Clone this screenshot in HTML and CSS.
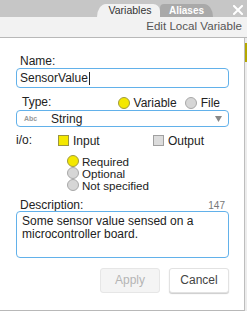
FILE: index.html
```html
<!DOCTYPE html>
<html>
<head>
<meta charset="utf-8">
<link rel="stylesheet" href="styles.css">
</head>
<body>
<div class="window">
  <div class="topbar">
    <div class="tab tab-active">Variables</div>
    <div class="tab tab-inactive">Aliases</div>
    <svg class="close" width="10" height="10" viewBox="0 0 10 10"><path d="M1 1 L9 9 M9 1 L1 9" stroke="#fff" stroke-width="2" stroke-linecap="square"/></svg>
  </div>
  <div class="subbar">Edit Local Variable</div>
  <div class="main">
    <div class="panel">
      <div class="lbl lbl-name">Name:</div>
      <div class="input">SensorValue<span class="caret"></span></div>

      <div class="type-row">
        <span class="lbl lbl-type">Type:</span>
        <span class="opts">
          <span class="radio radio-on"></span><span class="opt">Variable</span>
          <span class="radio"></span><span class="opt">File</span>
        </span>
      </div>
      <div class="select">
        <span class="abc">Abc</span>
        <span class="sel-text">String</span>
        <svg class="arrow" width="7" height="6" viewBox="0 0 7 6"><path d="M0 0 H7 L3.5 6 Z" fill="#888"/></svg>
      </div>

      <div class="io-row">
        <span class="lbl lbl-io">i/o:</span>
        <span class="check-group"><span class="check check-on"></span><span>Input</span></span>
        <span class="check-group check-out"><span class="check"></span><span>Output</span></span>
      </div>

      <div class="radio-list">
        <div class="rl-item"><span class="radio radio-on"></span><span class="rl-text">Required</span></div>
        <div class="rl-item"><span class="radio"></span><span class="rl-text">Optional</span></div>
        <div class="rl-item"><span class="radio"></span><span class="rl-text">Not specified</span></div>
      </div>

      <div class="desc-row">
        <span class="lbl">Description:</span>
        <span class="count">147</span>
      </div>
      <div class="textarea">Some sensor value sensed on a microcontroller board.</div>

      <div class="buttons">
        <div class="btn btn-disabled">Apply</div>
        <div class="btn btn-cancel">Cancel</div>
      </div>
    </div>
    <div class="gutter"><div class="thumb"></div></div>
  </div>
</div>
</body>
</html>
```

FILE: styles.css
```css
html, body {
  margin: 0;
  padding: 0;
  background: #fff;
}
body {
  font-family: "Liberation Sans", Arial, Helvetica, sans-serif;
  font-size: 12px;
  color: #222;
}
.window {
  width: 247px;
  height: 311px;
  display: flex;
  flex-direction: column;
  overflow: hidden;
}
.topbar {
  height: 17px;
  background: #c6c6c6;
  display: flex;
  align-items: flex-end;
  padding-left: 97px;
  box-sizing: border-box;
}
.tab {
  height: 13px;
  line-height: 13px;
  font-size: 10.5px;
  text-align: center;
  box-sizing: border-box;
}
.tab-active {
  width: 63px;
  background: #f2f2f2;
  color: #333;
  border-radius: 9px 7px 0 0 / 13px 7px 0 0;
  padding-left: 3px;
}
.tab-inactive {
  width: 53px;
  background: #a9a9a9;
  color: #fff;
  font-weight: bold;
  font-size: 10px;
  border-radius: 4px 9px 0 0 / 4px 13px 0 0;
}
.close {
  margin-left: 20px;
  margin-bottom: 2px;
}
.subbar {
  height: 20px;
  background: #f2f2f2;
  color: #555;
  text-align: right;
  padding-right: 5px;
  line-height: 18px;
  font-size: 11.6px;
  border-bottom: 1px solid #b8b8b8;
}
.main {
  flex: 1;
  display: flex;
}
.panel {
  flex: 1;
  border-right: 1px solid #bdbdbd;
  border-bottom: 1px solid #b8b8b8;
  padding: 17px 15px 0 16px;
  display: flex;
  flex-direction: column;
}
.gutter {
  width: 2px;
  background: #ececec;
  padding-top: 5px;
}
.thumb {
  height: 19px;
  background: #b5a800;
}
.lbl {
  line-height: 13px;
  color: #222;
}
.lbl-name {
  padding-left: 4px;
}
.input {
  height: 20px;
  box-sizing: border-box;
  border: 1px solid #62b1ea;
  border-radius: 4px;
  padding-left: 3px;
  line-height: 18px;
  display: flex;
  align-items: center;
}
.caret {
  display: inline-block;
  width: 1px;
  height: 13px;
  background: #222;
  margin-left: 1px;
}
.type-row {
  margin-top: 7px;
  height: 15px;
  display: flex;
  align-items: center;
  justify-content: space-between;
  padding-left: 6px;
  padding-right: 9px;
}
.opts {
  display: flex;
  align-items: center;
}
.opt {
  margin-left: 4px;
  margin-right: 8px;
}
.opt:last-child {
  margin-right: 0;
}
.radio {
  display: inline-block;
  width: 10px;
  height: 10px;
  border-radius: 50%;
  background: #d6d6d6;
  border: 1px solid #a8a8a8;
  flex: none;
}
.radio-on {
  background: #f4e800;
  border-color: #a09a40;
}
.select {
  height: 17px;
  box-sizing: border-box;
  border: 1px solid #62b1ea;
  border-radius: 4px;
  display: flex;
  align-items: center;
  padding-left: 7px;
  padding-right: 6px;
}
.abc {
  font-size: 7px;
  font-weight: bold;
  color: #999;
  width: 27px;
}
.sel-text {
  flex: 1;
}
.io-row {
  margin-top: 7px;
  height: 13px;
  display: flex;
  align-items: center;
}
.lbl-io {
  width: 42px;
}
.check-group {
  display: flex;
  align-items: center;
  width: 95px;
}
.check-out {
  width: auto;
}
.check {
  display: inline-block;
  width: 9px;
  height: 9px;
  background: #dcdcdc;
  border: 1px solid #a0a0a0;
  margin-right: 4px;
}
.check-on {
  background: #f4e800;
  border-color: #9a9540;
}
.radio-list {
  margin-top: 8px;
  padding-left: 51px;
  display: flex;
  flex-direction: column;
}
.rl-item {
  height: 12px;
  display: flex;
  align-items: center;
}
.rl-text {
  font-size: 11.6px;
  line-height: 11px;
  display: block;
  height: 11px;
}
.rl-item .radio {
  margin-right: 3px;
}
.desc-row {
  margin-top: 8px;
  display: flex;
  justify-content: space-between;
  padding-left: 4px;
  padding-right: 4px;
  height: 12px;
}
.count {
  font-size: 10px;
  color: #777;
  line-height: 13px;
}
.textarea {
  height: 47px;
  box-sizing: border-box;
  border: 1px solid #62b1ea;
  border-radius: 4px;
  padding: 3px 5px 0 5px;
  line-height: 13px;
}
.buttons {
  margin-top: 10px;
  display: flex;
  justify-content: flex-end;
  gap: 9px;
}
.btn {
  width: 60px;
  height: 25px;
  box-sizing: border-box;
  border-radius: 3px;
  text-align: center;
  line-height: 23px;
}
.btn-disabled {
  background: #f4f4f4;
  border: 1px solid #e6e6e6;
  color: #b4b4b4;
}
.btn-cancel {
  background: #fff;
  border: 1px solid #e2e2e2;
  box-shadow: 0 1px 1px #ccc;
  color: #444;
}
```
